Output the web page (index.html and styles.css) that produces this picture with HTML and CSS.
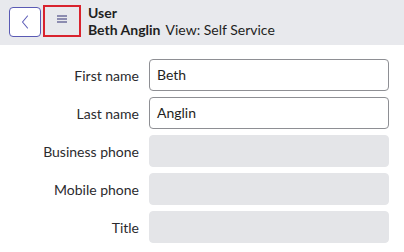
FILE: index.html
```html
<!DOCTYPE html>
<html>
<head>
<meta charset="utf-8">
<link rel="stylesheet" href="styles.css">
</head>
<body>
<header class="header">
  <button class="back" aria-label="Back">
    <svg width="10" height="16" viewBox="0 0 10 16"><path d="M7.5 2 L2.5 8 L7.5 14" fill="none" stroke="#5c5cb8" stroke-width="1.1" stroke-linecap="round" stroke-linejoin="round"/></svg>
  </button>
  <button class="menu" aria-label="Menu">
    <svg width="12" height="10" viewBox="0 0 12 10"><path d="M1 2h10M1 5h10M1 8h10" stroke="#6d6d9c" stroke-width="1.6"/></svg>
  </button>
  <div class="titles">
    <div class="title">User</div>
    <div class="subtitle"><span class="name">Beth Anglin</span><span class="view">View: Self Service</span></div>
  </div>
</header>
<main class="form">
  <label class="label">First name</label><div class="input">Beth</div>
  <label class="label">Last name</label><div class="input">Anglin</div>
  <label class="label">Business phone</label><div class="input disabled"></div>
  <label class="label">Mobile phone</label><div class="input disabled"></div>
  <label class="label">Title</label><div class="input disabled"></div>
</main>
</body>
</html>
```
FILE: styles.css
```css
* { box-sizing: border-box; }
body {
  margin: 0;
  font-family: Lato, "Open Sans", sans-serif;
  color: #1f1f22;
  background: #fff;
}
.header {
  height: 45px;
  background: #e8e9ed;
  display: flex;
  align-items: flex-start;
  padding: 6px 0 0 9px;
}
.back {
  width: 32px;
  height: 30px;
  background: #fff;
  border: 1px solid #5a5ab4;
  border-radius: 4px;
  display: flex;
  align-items: center;
  justify-content: center;
  padding: 0;
  margin-top: 1px;
}
.menu {
  width: 38px;
  height: 32px;
  margin-left: 2px;
  margin-top: -1px;
  background: transparent;
  border: 2px solid #d9232e;
  display: flex;
  align-items: center;
  justify-content: center;
  padding: 0 0 4px 0;
}
.titles {
  margin-left: 7px;
  margin-top: -2px;
  line-height: 17px;
  font-size: 14px;
}
.title { font-weight: 700; }
.subtitle { display: flex; }
.name { font-weight: 700; }
.view { margin-left: 5px; }
.form {
  display: grid;
  grid-template-columns: 139px 240px;
  column-gap: 10px;
  row-gap: 6px;
  padding-top: 14px;
  align-items: center;
}
.label {
  text-align: right;
  font-size: 14px;
  color: #2b2b2e;
}
.input {
  height: 32px;
  border: 1px solid #8e8f94;
  border-radius: 4px;
  background: #fff;
  font-size: 14px;
  line-height: 30px;
  padding: 0 7px;
  color: #1f1f22;
}
.input.disabled {
  background: #e4e5e8;
  border-color: #e4e5e8;
}
```
